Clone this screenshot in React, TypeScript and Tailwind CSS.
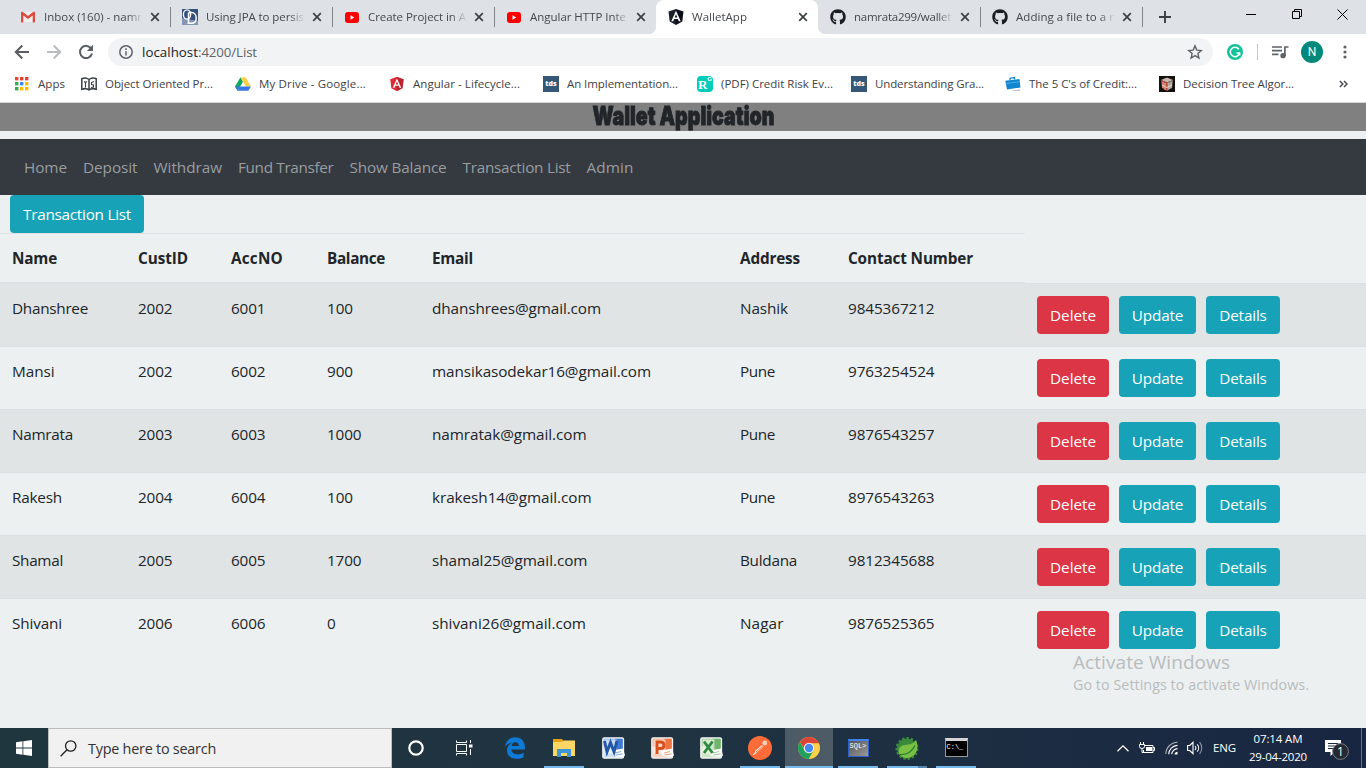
import { useLayoutEffect, useRef, useState } from "react";
import type { ReactNode } from "react";
import { FaGithub } from "react-icons/fa";

/* Text whose advance width is adjusted to `w` pixels by tracking. */
function T({ w, children, className = "" }: { w?: number; children: string; className?: string }) {
  const ref = useRef<HTMLSpanElement>(null);
  const [ls, setLs] = useState(0);
  useLayoutEffect(() => {
    if (ref.current && w) setLs((w - ref.current.getBoundingClientRect().width) / children.length);
  }, []);
  return (
    <span ref={ref} className={`whitespace-pre ${className}`} style={{ letterSpacing: ls }}>
      {children}
    </span>
  );
}

/* Heading squeezed horizontally to `w` pixels. */
function Squeezed({ w, children }: { w: number; children: string }) {
  const ref = useRef<HTMLSpanElement>(null);
  const [k, setK] = useState(1);
  useLayoutEffect(() => {
    if (ref.current) setK(w / ref.current.offsetWidth);
  }, []);
  return (
    <span ref={ref} className="inline-block whitespace-pre [-webkit-text-stroke:0.9px_#212529]" style={{ transform: `scaleX(${k})` }}>
      {children}
    </span>
  );
}

const Gmail = () => (
  <svg width="16" height="16" viewBox="0 0 16 16">
    <path d="M2 3h12v10H2z" fill="#f1efef" />
    <path d="M1 4v8.500a1 1 0 0 0 1 1h1.300V6.500L8 10l4.700-3.500v7H14a1 1 0 0 0 1-1V4c0-1-1.200-1.500-2-.9L8 7 3 3.100C2.200 2.500 1 3 1 4z" fill="#dd4b3e" />
  </svg>
);
const Jpa = () => (
  <svg width="16" height="16" viewBox="0 0 16 16">
    <path d="M0 0h16v16H0z" fill="#35507f" />
    <path d="M0 9l16 3v4H0z" fill="#8496b4" />
    <ellipse cx="5" cy="5.500" rx="3.600" ry="4.600" fill="none" stroke="#fff" strokeWidth="1.400" />
    <path d="M6.500 3.500v10.800M5.500 14.300h4c3 0 4.700-2 4.700-5.400s-2-5.400-4.700-5.400H6.500" fill="none" stroke="#fff" strokeWidth="1.500" />
  </svg>
);
const YouTube = () => (
  <svg width="16" height="16" viewBox="0 0 16 16">
    <rect x="1" y="3" width="14" height="11" rx="3" fill="#f00" />
    <path d="M6.500 6.200v4.600L10.300 8.500z" fill="#fff" />
  </svg>
);
const Shield = ({ a, b }: { a: string; b: string }) => (
  <svg width="16" height="16" viewBox="0 0 16 16">
    <path d="M8 0L.5 2.600l1.200 10L8 16z" fill={a} />
    <path d="M8 0l7.500 2.600-1.200 10L8 16z" fill={b} />
    <path d="M8 1.800L3.300 12.300h1.900l.9-2.300h3.800l.9 2.300h1.900zm0 3.500L9.400 8.500H6.600z" fill="#fff" fillRule="evenodd" />
  </svg>
);
const GitHub = () => <FaGithub className="h-4 w-4 text-[#1b1f23]" />;

const tabs: { t: string; w: number; icon: ReactNode; active?: boolean; sep?: boolean }[] = [
  { t: "Inbox (160) - namr", w: 98, icon: <Gmail />, sep: true },
  { t: "Using JPA to persis", w: 98, icon: <Jpa />, sep: true },
  { t: "Create Project in A", w: 98, icon: <YouTube />, sep: true },
  { t: "Angular HTTP Inte", w: 96, icon: <YouTube /> },
  { t: "WalletApp", w: 55, icon: <Shield a="#1b1f2b" b="#0c0f19" />, active: true },
  { t: "namrata299/wallet", w: 97, icon: <GitHub />, sep: true },
  { t: "Adding a file to a r", w: 98, icon: <GitHub />, sep: true },
];

function TabStrip() {
  return (
    <div className="flex h-[34px] bg-[#dee1e6] pl-2 text-[11.500px] text-[#45484c]">
      {tabs.map((tab) => (
        <div
          key={tab.t}
          className={
            "relative flex w-[162px] shrink-0 items-center pl-3 " +
            (tab.active ? "z-10 rounded-t-lg bg-white before:absolute before:bottom-0 before:-left-2 before:h-2 before:w-2 before:bg-[radial-gradient(circle_at_0_0,transparent_8px,#fff_8.500px)] after:absolute after:-right-2 after:bottom-0 after:h-2 after:w-2 after:bg-[radial-gradient(circle_at_100%_0,transparent_8px,#fff_8.500px)]" : "")
          }
        >
          <span className="flex h-4 w-4 shrink-0 items-center justify-center">{tab.icon}</span>
          <span className="ml-2 w-[99px] shrink-0 [mask-image:linear-gradient(to_right,#000_84%,transparent)]">
            <T w={tab.w}>{tab.t}</T>
          </span>
          <svg className="ml-[7px] shrink-0" width="10" height="10" viewBox="0 0 10 10" stroke="#3c4043" strokeWidth="1.700">
            <path d="M1.200 1.200l7.600 7.600M8.800 1.200L1.200 8.800" />
          </svg>
          {tab.sep && <i className="absolute top-[7px] right-[-1px] h-5 w-px bg-[#80848a]" />}
        </div>
      ))}
      <svg className="mt-[11px] ml-[17px]" width="12" height="12" viewBox="0 0 12 12" stroke="#3c4043" strokeWidth="1.900">
        <path d="M6 0v12M0 6h12" />
      </svg>
      <div className="mr-[18px] ml-auto flex items-start pt-[9px]">
        <svg width="102" height="12" viewBox="0 0 102 12" fill="none" stroke="#000">
          <path d="M0 5.500h10M46.500 2.500h7v7h-7zM48.500 2v-1.500h7v7h-2M91.500 .5l10 10M101.500 .5l-10 10" />
        </svg>
      </div>
    </div>
  );
}

function Toolbar() {
  return (
    <div className="flex h-9 items-center bg-white pr-[19px] pl-[14px]">
      <svg width="16" height="16" viewBox="0 0 16 16" fill="none" stroke="#5a5e62" strokeWidth="2">
        <path d="M15 8H2M8.300 1.500L1.800 8l6.500 6.500" />
      </svg>
      <svg className="ml-4" width="16" height="16" viewBox="0 0 16 16" fill="none" stroke="#b9bbbe" strokeWidth="2">
        <path d="M1 8h13M7.700 1.500L14.200 8l-6.500 6.500" />
      </svg>
      <svg className="ml-4" width="16" height="16" viewBox="0 0 16 16" fill="none" stroke="#5a5e62" strokeWidth="2">
        <path d="M13.300 4.800A6.100 6.100 0 1 0 14 9.500" />
        <path d="M15 .8v6.200H8.800z" fill="#5a5e62" stroke="none" />
      </svg>
      <div className="ml-[14px] flex h-7 w-[1105px] items-center rounded-full bg-[#f1f3f4] pr-[10px] pl-[11px] text-[13.300px]">
        <svg width="14" height="14" viewBox="0 0 14 14" fill="none" stroke="#5f6368" strokeWidth="1.500">
          <circle cx="7" cy="7" r="6.200" />
          <path d="M7 6.200v4.300M7 3.300v1.600" />
        </svg>
        <span className="ml-[9px] flex pt-px">
          <T w={56} className="text-[#202124]">localhost</T>
          <T w={59} className="text-[#5f6368]">:4200/List</T>
        </span>
        <svg className="ml-auto" width="16" height="16" viewBox="0 0 16 16" fill="none" stroke="#5f6368" strokeWidth="1.400">
          <path d="M8 1.900l1.800 4.200 4.500.4-3.400 3 1 4.500L8 11.600 4.100 14l1-4.500-3.400-3 4.500-.4z" />
        </svg>
      </div>
      <svg className="ml-[14px]" width="16" height="16" viewBox="0 0 16 16">
        <circle cx="8" cy="8" r="8" fill="#15c39a" />
        <path d="M11.800 5.200A4.700 4.700 0 1 0 12.600 9H9.500M12.600 8.300v3.200" fill="none" stroke="#fff" strokeWidth="1.500" />
      </svg>
      <i className="ml-[14px] h-4 w-px bg-[#c4c7ca]" />
      <svg className="ml-[14px]" width="17" height="14" viewBox="0 0 17 14" fill="none" stroke="#5f6368" strokeWidth="1.700">
        <path d="M0 2h10M0 5.700h10M0 9.400h6.500M12.900 11V2h3.600" />
        <circle cx="11" cy="10.700" r="1.800" fill="#5f6368" />
      </svg>
      <span className="ml-[12px] flex h-[22px] w-[22px] items-center justify-center rounded-full bg-[#00897b] font-['Roboto',sans-serif] text-xs text-white">N</span>
      <svg className="ml-auto" width="4" height="14" viewBox="0 0 4 14" fill="#5f6368">
        <circle cx="2" cy="2" r="1.600" />
        <circle cx="2" cy="7" r="1.600" />
        <circle cx="2" cy="12" r="1.600" />
      </svg>
    </div>
  );
}

const AppsIcon = () => (
  <svg width="14" height="14" viewBox="0 0 14 14">
    {["#ea4335", "#ea4335", "#ea4335", "#34a853", "#4285f4", "#fbbc05", "#34a853", "#fbbc05", "#fbbc05"].map((c, i) => (
      <rect key={i} x={(i % 3) * 5} y={Math.floor(i / 3) * 5} width="3.400" height="3.400" fill={c} />
    ))}
  </svg>
);
const BookIcon = () => (
  <svg width="16" height="16" viewBox="0 0 16 16" fill="none" stroke="#3c4043" strokeWidth="1.500">
    <path d="M.8 2.800C3.500 1.700 6 1.900 8 3.500c2-1.600 4.500-1.800 7.200-.7v10.400c-2.700-.9-5.200-.8-7.200.8-2-1.600-4.500-1.700-7.200-.8zM8 3.500V14" />
    <path d="M3 5.500l1.500 1L6 5.500M4.500 6.500V11.500M13 5.500l-2.500 1v2l2 .5v2l-2.500.5" strokeWidth="1.100" />
  </svg>
);
const DriveIcon = () => (
  <svg width="16" height="16" viewBox="0 0 16 16">
    <path d="M5.500 1.300L0 10.500l2.700 4.200 5.300-9z" fill="#11a861" />
    <path d="M5.500 1.300h5l5.500 9.200h-5.300z" fill="#ffcf48" />
    <path d="M5.300 10.500H16l-2.700 4.200H2.700z" fill="#3777e3" />
    <path d="M0 10.500l2.700 4.200 2.600-4.200z" fill="#3777e3" />
  </svg>
);
const Tds = () => (
  <span className="flex h-4 w-4 items-center justify-center bg-[#355876] text-[7px] leading-none font-extrabold text-white">tds</span>
);
const Rg = () => (
  <span className="flex h-4 w-4 items-center justify-center rounded-sm bg-[#00ccbb] pt-px font-['Liberation_Serif',serif] text-[13px] leading-none font-bold text-white">
    R<sup className="-top-[5px] font-['Liberation_Sans',sans-serif] text-[6px]">G</sup>
  </span>
);
const Briefcase = () => (
  <svg width="16" height="16" viewBox="0 0 16 16">
    <path d="M.3 4.800L14.500 3l1 8.500L2 13.500z" fill="#0f86ce" />
    <path d="M5 4.200V2.200l4.500-.7v2" fill="none" stroke="#0f86ce" strokeWidth="1.300" />
    <path d="M.5 7.600l14.500-1.900" stroke="#5cb8ec" strokeWidth=".8" />
    <path d="M5 14.700l10-1.200v1.300z" fill="#a9b1b7" />
  </svg>
);
const TreeIcon = () => (
  <svg width="16" height="16" viewBox="0 0 16 16">
    <path d="M0 0h16v16H0z" fill="#111" />
    <path d="M2 4l6-2.500L14 4 8 6.500z" fill="#c9b8b0" />
    <path d="M2 4l6 2.500V15l-5-3z" fill="#b84a38" />
    <path d="M14 4L8 6.500V15l5-3z" fill="#8e8078" />
    <path d="M4 6v6M6 7v7M10 7v6M12 6v6M3 9l5 2.500L13 9" stroke="#efe3da" strokeWidth=".8" fill="none" />
  </svg>
);

const bookmarks: { t: string; w: number; icon: ReactNode }[] = [
  { t: "Object Oriented Pr...", w: 108, icon: <BookIcon /> },
  { t: "My Drive - Google...", w: 107, icon: <DriveIcon /> },
  { t: "Angular - Lifecycle...", w: 107, icon: <span className="scale-90"><Shield a="#dd2c36" b="#b92333" /></span> },
  { t: "An Implementation...", w: 111, icon: <Tds /> },
  { t: "(PDF) Credit Risk Ev...", w: 112, icon: <Rg /> },
  { t: "Understanding Gra...", w: 109, icon: <Tds /> },
  { t: "The 5 C's of Credit:...", w: 108, icon: <Briefcase /> },
  { t: "Decision Tree Algor...", w: 111, icon: <TreeIcon /> },
];

function Bookmarks() {
  return (
    <div className="flex h-[33px] items-center border-b border-[#d5d8db] bg-white pb-[5px] pl-[15px] text-[11.500px] text-[#3f4246]">
      <div className="flex w-[66px] items-center gap-[9px]">
        <AppsIcon />
        <T w={27} className="pt-px">Apps</T>
      </div>
      {bookmarks.map((b, i) => (
        <div key={i} className="flex w-[154px] shrink-0 items-center gap-2">
          <span className="flex h-4 w-4 shrink-0 items-center">{b.icon}</span>
          <T w={b.w} className="pt-px">{b.t}</T>
        </div>
      ))}
      <svg className="ml-[26px]" width="9" height="8" viewBox="0 0 9 8" fill="none" stroke="#4a4d51" strokeWidth="1.500">
        <path d="M.8 1l3 3-3 3M5 1l3 3-3 3" />
      </svg>
    </div>
  );
}

const nav: [string, number][] = [
  ["Home", 43],
  ["Deposit", 54.500],
  ["Withdraw", 68.500],
  ["Fund Transfer", 95.500],
  ["Show Balance", 97],
  ["Transaction List", 108],
  ["Admin", 47],
];

const heads: [string, number][] = [
  ["Name", 45],
  ["CustID", 50],
  ["AccNO", 52],
  ["Balance", 58],
  ["Email", 41],
  ["Address", 60],
  ["Contact Number", 125],
];

const rows: { cells: [string, number][] }[] = [
  { cells: [["Dhanshree", 76], ["2002", 34.500], ["6001", 34.500], ["100", 26], ["dhanshrees@gmail.com", 169], ["Nashik", 48], ["9845367212", 86.500]] },
  { cells: [["Mansi", 42.500], ["2002", 34.500], ["6002", 34.500], ["900", 26], ["mansikasodekar16@gmail.com", 219], ["Pune", 35], ["9763254524", 86.500]] },
  { cells: [["Namrata", 61], ["2003", 34.500], ["6003", 34.500], ["1000", 34.500], ["namratak@gmail.com", 154.500], ["Pune", 35], ["9876543257", 86.500]] },
  { cells: [["Rakesh", 50], ["2004", 34.500], ["6004", 34.500], ["100", 26], ["krakesh14@gmail.com", 159.500], ["Pune", 35], ["8976543263", 86.500]] },
  { cells: [["Shamal", 51], ["2005", 34.500], ["6005", 34.500], ["1700", 34.500], ["shamal25@gmail.com", 155.500], ["Buldana", 57], ["9812345688", 86.500]] },
  { cells: [["Shivani", 50], ["2006", 34.500], ["6006", 34.500], ["0", 8.600], ["shivani26@gmail.com", 154], ["Nagar", 43.500], ["9876525365", 86.500]] },
];

const cols = "grid grid-cols-[126px_93px_96px_105px_308px_108px_189px_341px]";
const btn = "flex h-[38px] items-center justify-center rounded text-white";

function Page() {
  return (
    <main className="flex h-[625px] flex-col bg-[#ecf0f1] text-[15.300px] leading-6 text-[#212529]">
      <h1 className="mb-2 flex h-7 shrink-0 items-center justify-center bg-[#808080] pb-[2px] font-['Inter',sans-serif] text-[26px] leading-6 font-black">
        <Squeezed w={182}>Wallet Application</Squeezed>
      </h1>
      <nav className="flex h-14 shrink-0 items-center gap-4 bg-[#343a40] pl-6 text-[#9a9da0]">
        {nav.map(([t, w]) => (
          <T key={t} w={w}>{t}</T>
        ))}
      </nav>
      <div className="pl-[10px]">
        <button className={`${btn} w-[134px] bg-[#17a2b8]`}>
          <T w={108}>Transaction List</T>
        </button>
      </div>
      <div className={cols}>
        {heads.map(([t, w]) => (
          <div key={t} className="h-[50px] border-t border-b border-b-[#dee2e6] border-t-[#dee2e6] py-3 pl-3 font-bold">
            <T w={w}>{t}</T>
          </div>
        ))}
      </div>
      {rows.map((r, i) => (
        <div key={i} className={`${cols} h-[63px] border-t border-[#dce0e3] ${i % 2 ? "" : "bg-[#e0e4e5]"}`}>
          {r.cells.map(([t, w], j) => (
            <div key={j} className="pt-3 pl-3">
              <T w={w}>{t}</T>
            </div>
          ))}
          <div className="flex gap-[10px] pt-3 pl-3">
            <button className={`${btn} w-[72px] bg-[#dc3545]`}>
              <T w={46}>Delete</T>
            </button>
            <button className={`${btn} w-[77px] bg-[#17a2b8]`}>
              <T w={51.500}>Update</T>
            </button>
            <button className={`${btn} w-[74px] bg-[#17a2b8]`}>
              <T w={47.500}>Details</T>
            </button>
          </div>
        </div>
      ))}
    </main>
  );
}

const Edge = () => (
  <svg width="20" height="22" viewBox="0 0 20 22" fill="#0e7ad8">
    <path d="M0 9.700C.8 4 4.600.3 10.200.3c6 0 9.700 4.100 9.700 9.900v2.300H6.500c.2 3.300 2.800 4.900 6.100 4.900 2.300 0 4.300-.6 6-1.700v4.500c-2 1.100-4.400 1.600-7 1.600C6 21.800 2 18.500 2 13.400 2 9.800 4 7.200 7.300 5.600 4.500 5.700 1.800 7.200 0 9.700zM6.600 9h7.300c0-2.300-1.200-3.700-3.400-3.700-2.300 0-3.600 1.600-3.900 3.700z" />
  </svg>
);
const Explorer = () => (
  <svg width="22" height="18" viewBox="0 0 22 18">
    <path d="M0 0h9l1.500 2H22v15H0z" fill="#e7a112" />
    <path d="M0 3h9l1.500-1.500H22V17H0z" fill="#fdd663" />
    <path d="M4 18v-8h14v8h-4v-4H8v4z" fill="#3d96d8" />
  </svg>
);
const Office = ({ c, m, l, d }: { c: string; m: string; l: string; d: string }) => (
  <svg width="23" height="23" viewBox="0 0 23 23">
    <rect x="1" y="1" width="20.500" height="20" rx="1" fill={l} />
    <path d="M1.500 1.500H21V10L12 13 1.500 9z" fill={m} opacity=".55" />
    <path d="M13 1.500h8V12l-9 1z" fill={m} />
    <rect x="2.500" y="2.500" width="12" height="14" fill="#fff" opacity=".6" />
    <rect x=".8" y=".8" width="20.700" height="20.400" rx="1.500" fill="none" stroke="#f7f7f7" strokeWidth="1.300" />
    <path d="M10 14l11-2.500 2 7-3 1.500-9-1z" fill="#fff" />
    <path d="M13 16l6-1.500M13.500 18l7-1" stroke={m} strokeWidth=".7" />
    <path d={d} fill="none" stroke={c} strokeWidth="2.900" />
  </svg>
);
const Postman = () => (
  <svg width="24" height="24" viewBox="0 0 24 24">
    <circle cx="12" cy="12" r="12" fill="#ff6c37" />
    <path d="M6 18.500l1.500-4L14 9l1.500 1.500L9 16.500z" fill="#ffe3d8" />
    <path d="M5 19l3-2.500" stroke="#fff" strokeWidth="1" />
    <circle cx="16.800" cy="7" r="2.400" fill="#ffd0bd" />
    <path d="M8 16l7-6" stroke="#ff6c37" strokeWidth=".8" />
  </svg>
);
const Chrome = () => (
  <svg width="22" height="22" viewBox="0 0 22 22">
    <circle cx="11" cy="11" r="11" fill="#fdd04a" />
    <path d="M11 11L6.500 13.500 2 4.700A11 11 0 0 0 10.500 22l5-8.300z" fill="#1fa05c" />
    <path d="M2 4.700A11 11 0 0 1 20.200 5.100Q20.700 6 20.800 6.200H11L6.300 12z" fill="#dc4437" />
    <circle cx="11" cy="11" r="5.200" fill="#f3f3f3" />
    <circle cx="11" cy="11" r="4.200" fill="#4587f3" />
  </svg>
);
const Sql = () => (
  <div className="flex h-[18px] w-[21px] items-start border border-t-2 border-[#2f5fc8] border-t-[#3f82ee] bg-linear-to-br from-[#555] to-[#999] pt-px font-['Liberation_Mono',monospace] text-[7px] leading-[8px] text-white">
    <span className="pl-px">SQL&gt;</span>
  </div>
);
const Spring = () => (
  <svg width="24" height="24" viewBox="0 0 24 24">
    <circle cx="12" cy="12.500" r="9.500" fill="#3b8a3c" stroke="#3b8a3c" strokeWidth="4" strokeDasharray="2.200 1.800" />
    <circle cx="12" cy="12.500" r="10" fill="#3b8a3c" />
    <path d="M21 4c2.500 6 1.500 12-2.500 15.500-4 3.300-10.500 3.300-13.500-.5C1.800 14 5 9.500 10 9c5-.5 8.500-1 11-5z" fill="#7ac143" />
    <path d="M5 18.500c6.500.5 12-3 15-9" fill="none" stroke="#2f7a33" strokeWidth="1.300" />
  </svg>
);
const Cmd = () => (
  <div className="mb-px flex h-[19px] w-[23px] items-start border border-t-[3px] border-[#999] border-t-[#d5d5d5] bg-black pt-[2px] font-['Liberation_Mono',monospace] text-[7px] leading-[8px] text-white">
    <span className="pl-px">C:\_</span>
  </div>
);

const apps: { icon: ReactNode; line?: string; bg?: string }[] = [
  { icon: <svg width="16" height="16" viewBox="0 0 16 16"><circle cx="8" cy="8" r="6.700" fill="none" stroke="#fff" strokeWidth="2.200" /></svg> },
  {
    icon: (
      <svg width="17" height="16" viewBox="0 0 17 16" fill="none" stroke="#fff">
        <path d="M.5 .5v2h10v-2M.5 15.500v-2h10v2M.5 4.500h10v7H.5zM14.500 0v3M14.500 9v6" />
        <path d="M13 4.500h3.500v3H13z" fill="#fff" stroke="none" />
      </svg>
    ),
  },
  { icon: <Edge /> },
  { icon: <Explorer />, line: "w-10 bg-[#76b9ed]" },
  { icon: <Office c="#2358a8" m="#3f7bd0" l="#cfe0f6" d="M2.500 4l2.500 11L8.500 5.500 12 15l3-11" /> },
  { icon: <Office c="#d8501c" m="#ee7440" l="#f9d3c2" d="M6 17V5h3.500c4.700 0 4.700 6.500 0 6.500H6" /> },
  { icon: <Office c="#2f8a3e" m="#6fb56a" l="#cfe8c6" d="M4 4.500L12.500 16M12.500 4.500L4 16" /> },
  { icon: <Postman />, line: "w-10 bg-[#76b9ed]" },
  { icon: <Chrome />, line: "w-12 bg-[#76b9ed]", bg: "bg-[#4c5b66]" },
  { icon: <Sql />, line: "w-10 bg-[#76b9ed]" },
  { icon: <Spring />, line: "w-10 bg-linear-to-r from-[#76b9ed] from-78% to-[#5486ae] to-78%" },
  { icon: <Cmd />, line: "w-10 bg-[#76b9ed]" },
];

function Taskbar() {
  return (
    <footer className="flex h-10 bg-linear-to-r from-[#20363f] via-[#1f3341] to-[#192642] text-white">
      <div className="flex w-12 items-center justify-center">
        <svg width="16" height="16" viewBox="0 0 16 16" fill="#fff">
          <path d="M0 2.200L6.500 1.300V7.500H0zM7.300 1.200L16 0v7.500H7.300zM0 8.400h6.500v6.300L0 13.800zM7.300 8.400H16V16l-8.700-1.200z" />
        </svg>
      </div>
      <div className="flex w-[344px] items-center border border-[#bcbcbc] bg-[#f1f1f1] pl-[11px] text-[14.400px] text-[#333]">
        <svg width="17" height="17" viewBox="0 0 17 17" fill="none" stroke="#222" strokeWidth="1.300">
          <circle cx="10.700" cy="6" r="5.200" />
          <path d="M7 9.700L.6 16.300" />
        </svg>
        <span className="ml-[11px] pt-px">
          <T w={128}>Type here to search</T>
        </span>
      </div>
      <div className="flex">
        {apps.map((a, i) => (
          <div key={i} className={`relative flex w-12 items-center justify-center ${i > 1 ? (i === 2 ? "ml-[3px]" : "ml-px") : ""} ${a.bg ?? ""}`}>
            {a.icon}
            {a.line && <i className={`absolute bottom-0 left-1/2 h-[2px] -translate-x-1/2 ${a.line}`} />}
          </div>
        ))}
      </div>
      <div className="mr-[4px] ml-auto flex items-center text-[11.500px]">
        <svg width="12" height="7" viewBox="0 0 12 7" fill="none" stroke="#fff" strokeWidth="1.200">
          <path d="M.5 6.200L6 .8l5.500 5.400" />
        </svg>
        <svg className="ml-[10px]" width="16" height="13" viewBox="0 0 16 13" fill="none" stroke="#fff">
          <path d="M5.500 3.500h8.500v7H4.500V8M14 5.500h1.500v3H14M1.500 0v2.500M4.500 0v2.500M.5 2.500h5v2a2.500 2 0 0 1-5 0zM3 6.500v4h2" />
          <path d="M7 5h6v4H7z" fill="#fff" stroke="none" />
        </svg>
        <svg className="ml-[10px]" width="14" height="14" viewBox="0 0 14 14" fill="none" stroke="#fff" strokeWidth="1.100">
          <path d="M.8 13A12 12 0 0 1 12.500 1.200" opacity=".65" />
          <path d="M3.700 13.300A9 9 0 0 1 12.500 4.400M6.700 13.300a6 6 0 0 1 5.800-5.700" />
          <path d="M9.500 13.500a3 3 0 0 1 3-2.700v2.700z" fill="#fff" stroke="none" />
        </svg>
        <svg className="ml-[8px]" width="16" height="14" viewBox="0 0 16 14" fill="none" stroke="#fff" strokeWidth="1.100">
          <path d="M.6 4.500h2.200L6 1.300v11.400L2.800 9.500H.6zM8 5a3 3 0 0 1 0 4M10.200 3.300a5.500 5.500 0 0 1 0 7.400" />
          <path d="M12.600 1.200a9 9 0 0 1 0 11.600" opacity=".5" />
        </svg>
        <span className="ml-[10px]">
          <T w={23}>ENG</T>
        </span>
        <div className="ml-[12px] flex w-[60px] flex-col items-center leading-[18px]">
          <T w={49}>07:14 AM</T>
          <T w={58}>29-04-2020</T>
        </div>
        <div className="relative ml-[17px] h-[24px] w-6">
          <svg width="24" height="24" viewBox="0 0 24 24">
            <path d="M0 4h16v12H9.500L5.500 20v-4H0z" fill="#fff" />
            <path d="M3 7.500h10M3 10h10M3 12.500h7" stroke="#1b2843" />
            <circle cx="15.500" cy="15.500" r="7.900" fill="#25282e" stroke="#7b7e84" strokeWidth="1" />
          </svg>
          <span className="absolute top-[8px] left-[12px] text-[12px] leading-[15px]">1</span>
        </div>
        <i className="ml-[12px] h-10 w-px bg-[#687186]" />
      </div>
    </footer>
  );
}

export default function App() {
  return (
    <div className="relative flex h-[768px] w-[1366px] flex-col overflow-hidden font-['Open_Sans','Noto_Sans',sans-serif]">
      <TabStrip />
      <Toolbar />
      <Bookmarks />
      <Page />
      <Taskbar />
      <div className="absolute top-[650px] left-[1073px] flex flex-col text-[#b9bcbd]">
        <span className="text-[19px] leading-6">
          <T w={157}>Activate Windows</T>
        </span>
        <span className="text-[14.300px] leading-[21px]">
          <T w={236}>Go to Settings to activate Windows.</T>
        </span>
      </div>
    </div>
  );
}
